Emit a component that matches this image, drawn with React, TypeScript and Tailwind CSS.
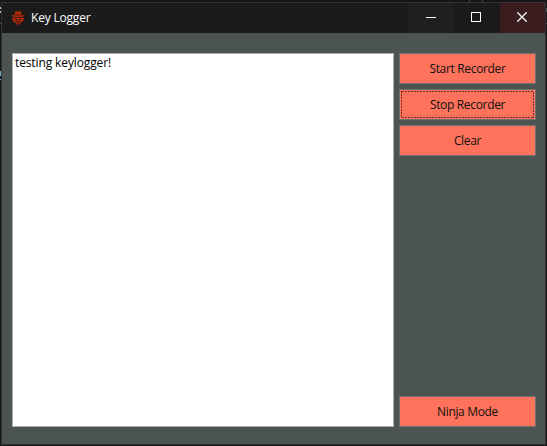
import type { ReactNode } from 'react';

function ActionButton({ children, focused = false }: { children: ReactNode; focused?: boolean }) {
  return (
    <button className="relative flex h-[31px] w-full shrink-0 items-center justify-center border border-[#707070] bg-[#ff725c] text-[12px] leading-[18px] tracking-[-0.33px] text-[#111111]">
      {children}
      {focused && (
        <svg className="absolute top-px left-px" width="133" height="27" fill="none" stroke="#702f27" shapeRendering="crispEdges">
          <rect x="0.5" y="0.5" width="132" height="26" strokeDasharray="2 1" />
        </svg>
      )}
    </button>
  );
}

function AgentIcon() {
  return (
    <svg width="14" height="14" viewBox="0 0 14 14" fill="#b02808">
      <path d="M3.500 3.800 4 .6 5.500 0 7 .7 8.500 0l1.500.6.500 3.200z" />
      <path d="M0 4.300h14L11.500 6h-9z" />
      <path fillRule="evenodd" d="M1 6.800h12l-.7 3L7 14 1.700 9.800zM4 8l.7 1.300 1.800.2L6 8.300zM10 8l-.7 1.300-1.800.2.500-1.200zM4.700 10.500 7 12.300l2.300-1.800z" />
    </svg>
  );
}

export default function App() {
  return (
    <div className="relative h-[446px] w-[547px] overflow-hidden bg-[#151515] pt-[2px] pr-px pb-px pl-px font-['Open_Sans',sans-serif]">
      <span className="absolute top-[7px] left-0 h-[2px] w-px bg-[#bbbbbb]" />
      <span className="absolute top-[11px] left-0 h-[2px] w-px bg-[#bbbbbb]" />
      <span className="absolute top-[23px] left-0 h-px w-px bg-[#555555]" />
      <span className="absolute top-[71px] left-0 h-[5px] w-px bg-[#6db5cf]" />
      <span className="absolute top-[79px] left-0 h-px w-px bg-[#6db5cf]" />
      <span className="absolute top-0 left-[469px] h-[2px] w-px bg-[#444444]" />
      <span className="absolute top-0 left-[482px] h-[2px] w-px bg-[#444444]" />
      <span className="absolute top-[8px] right-0 h-[4px] w-px bg-[#46514e]" />
      <span className="absolute top-[23px] right-0 h-px w-px bg-[#46514e]" />
      <div className="flex h-[443px] w-[545px] flex-col border border-[#333333] bg-[#4c5452]">
        <header className="flex h-[30px] shrink-0 items-stretch bg-[#1b1b1b] text-white">
          <div className="flex flex-1 items-center pb-px pl-[9px]">
            <AgentIcon />
            <span className="ml-[6px] text-[12px] leading-[18px] tracking-[-0.2px]">Key Logger</span>
          </div>
          <button aria-label="Minimize" className="flex w-[45px] items-center justify-center bg-[#202020] pb-[2px] pl-px">
            <svg width="10" height="10" shapeRendering="crispEdges"><path d="M0 5h10v1H0z" fill="white" /></svg>
          </button>
          <button aria-label="Maximize" className="flex w-[47px] items-center justify-center pr-px pb-[2px]">
            <span className="size-[10px] border border-white" />
          </button>
          <button aria-label="Close" className="flex w-[45px] items-center justify-center bg-[#3a1c1e] pr-px pb-[2px]">
            <svg width="10" height="10" stroke="#eeeeee" strokeWidth="1.4"><path d="M.3.3l9.400 9.400M9.700.3.3 9.700" /></svg>
          </button>
        </header>
        <main className="flex flex-1 gap-[5px] pt-5 pr-[9px] pb-[17px] pl-[10px]">
          <section className="h-[374px] w-[382px] border border-[#abadb3] bg-white pl-[2px] text-[12px] leading-[18px] tracking-[-0.12px] text-black">
            testing keylogger!
          </section>
          <aside className="flex h-[374px] w-[137px] flex-col gap-[5px]">
            <ActionButton>Start Recorder</ActionButton>
            <ActionButton focused>Stop Recorder</ActionButton>
            <ActionButton>Clear</ActionButton>
            <div className="flex-1" />
            <ActionButton>Ninja Mode</ActionButton>
          </aside>
        </main>
      </div>
    </div>
  );
}
